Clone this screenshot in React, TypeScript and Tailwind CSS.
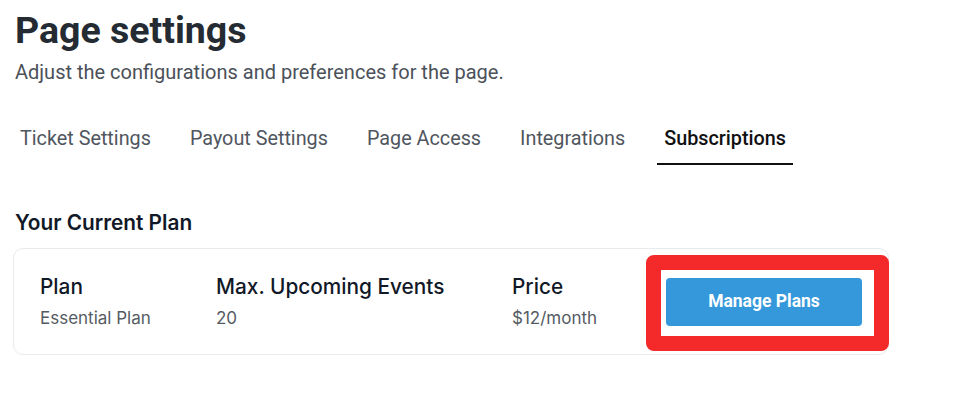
const tabs = ['Ticket Settings', 'Payout Settings', 'Page Access', 'Integrations', 'Subscriptions'];

export default function App() {
  const active = 'Subscriptions';

  return (
    <div className="min-h-screen bg-white pl-[15px] pt-[7px] font-['Roboto',sans-serif]">
      {/* Header */}
      <h1 className="text-[37.5px] font-bold leading-[46px] text-[#252b33]">Page settings</h1>
      <p className="mt-[6px] text-[20px] leading-[26px] text-[#4b5159]">
        Adjust the configurations and preferences for the page.
      </p>

      {/* Tabs */}
      <nav className="mt-[40px] -ml-[2px] flex gap-[25px]">
        {tabs.map((tab) => {
          const isActive = tab === active;
          return (
            <div
              key={tab}
              className={`px-[7px] pb-[10px] text-[19.8px] leading-[28px] ${
                isActive
                  ? 'border-b-2 border-[#111111] font-medium text-[#111111]'
                  : 'border-b-2 border-transparent text-[#50565e]'
              }`}
            >
              {tab}
            </div>
          );
        })}
      </nav>

      {/* Current plan */}
      <h2 className="mt-[44px] font-['Inter',sans-serif] text-[20.8px] font-semibold leading-[28px] text-[#111827]">
        Your Current Plan
      </h2>
      <div className="mt-[11px] -ml-[2px] flex h-[107px] w-[876px] items-center rounded-[10px] border border-[#e8eaed] pl-[26px] font-['Inter',sans-serif]">
        <div className="w-[176px]">
          <div className="text-[20.8px] font-medium leading-[28px] text-[#111827]">Plan</div>
          <div className="mt-[5px] text-[17px] leading-[24px] text-[#555b63]">Essential Plan</div>
        </div>
        <div className="w-[296px]">
          <div className="text-[20.8px] font-medium leading-[28px] text-[#111827]">Max. Upcoming Events</div>
          <div className="mt-[5px] text-[17px] leading-[24px] text-[#555b63]">20</div>
        </div>
        <div className="w-[154px]">
          <div className="text-[20.8px] font-medium leading-[28px] text-[#111827]">Price</div>
          <div className="mt-[5px] text-[17px] leading-[24px] text-[#555b63]">$12/month</div>
        </div>
        <div className="relative">
          <button className="h-[48px] w-[196px] rounded-[4px] bg-[#3498db] font-['Roboto',sans-serif] text-[17.5px] font-bold text-white">
            Manage Plans
          </button>
          {/* annotation box */}
          <div className="pointer-events-none absolute -left-[20px] -top-[23px] -right-[27px] -bottom-[25px] rounded-[8px] border-[15px] border-[#f42a2a]" />
        </div>
      </div>
    </div>
  );
}
